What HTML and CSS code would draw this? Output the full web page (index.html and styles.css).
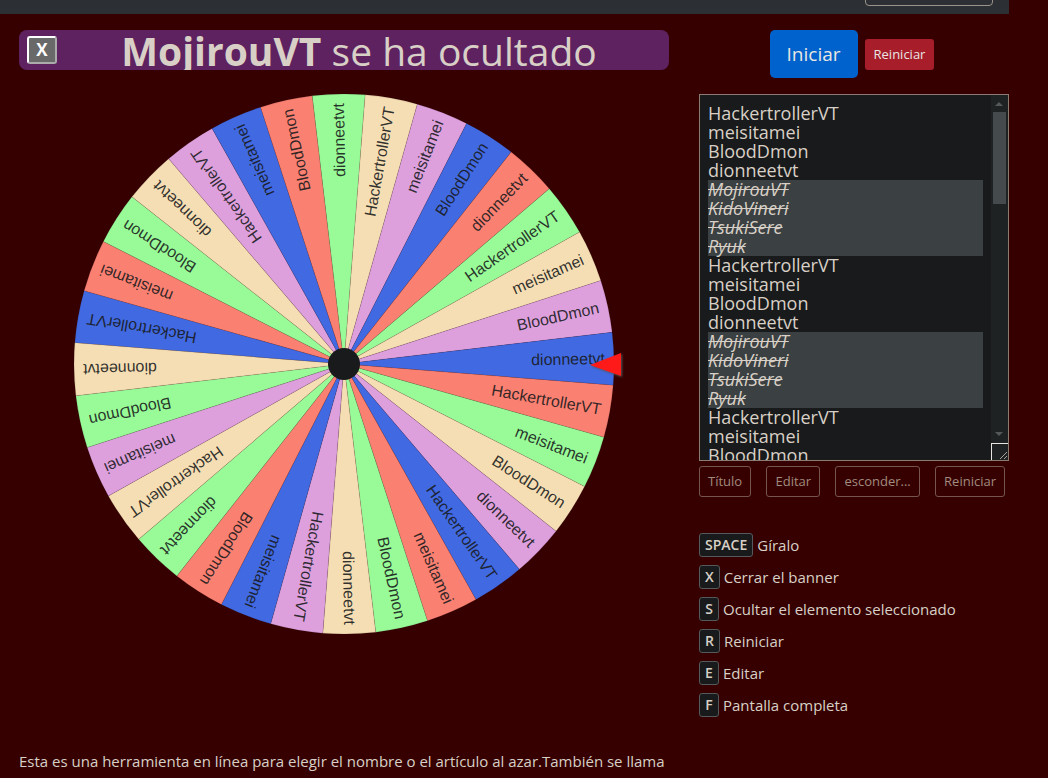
FILE: index.html
```
<!DOCTYPE html>
<html lang="es">
<head>
	<meta charset="UTF-8">
	<title>Ruleta</title>
	<link rel="stylesheet" href="styles.css">
</head>
<body>
	<header class="navbar">
		<input type="text" class="nav-input" aria-label="Buscar">
	</header>
	<main class="page">
		<section class="wheel-column">
			<div class="banner">
				<button class="banner-close">X</button>
				<p class="banner-text"><strong>MojirouVT</strong> se ha ocultado</p>
			</div>
			<svg id="wheel" class="wheel" viewBox="-280 -270 560 540"></svg>
		</section>
		<section class="side">
			<div class="main-buttons">
				<button class="btn btn-start">Iniciar</button>
				<button class="btn btn-reset">Reiniciar</button>
			</div>
			<div class="list-box">
				<div class="list" contenteditable="true" spellcheck="false" role="textbox" aria-multiline="true" aria-label="Elementos">
					<div>HackertrollerVT</div>
					<div>meisitamei</div>
					<div>BloodDmon</div>
					<div>dionneetvt</div>
					<div class="hidden-item">MojirouVT</div>
					<div class="hidden-item">KidoVineri</div>
					<div class="hidden-item">TsukiSere</div>
					<div class="hidden-item">Ryuk</div>
					<div>HackertrollerVT</div>
					<div>meisitamei</div>
					<div>BloodDmon</div>
					<div>dionneetvt</div>
					<div class="hidden-item">MojirouVT</div>
					<div class="hidden-item">KidoVineri</div>
					<div class="hidden-item">TsukiSere</div>
					<div class="hidden-item">Ryuk</div>
					<div>HackertrollerVT</div>
					<div>meisitamei</div>
					<div>BloodDmon</div>
				</div>
				<div class="scrollbar">
					<svg class="arrow" viewBox="0 0 17 17"><path d="M4 11h8L8 7z"/></svg>
					<div class="track"><div class="thumb"></div></div>
					<svg class="arrow" viewBox="0 0 17 17"><path d="M4 6h8l-4 4z"/></svg>
					<svg class="grip" viewBox="0 0 16 16"><path d="M8 15l7-7M12 15l3-3"/></svg>
				</div>
			</div>
			<div class="tools">
				<button class="btn btn-tool">Título</button>
				<button class="btn btn-tool">Editar</button>
				<button class="btn btn-tool">esconder...</button>
				<button class="btn btn-tool">Reiniciar</button>
			</div>
			<ul class="keys">
				<li><kbd>SPACE</kbd> Gíralo</li>
				<li><kbd>X</kbd> Cerrar el banner</li>
				<li><kbd>S</kbd> Ocultar el elemento seleccionado</li>
				<li><kbd>R</kbd> Reiniciar</li>
				<li><kbd>E</kbd> Editar</li>
				<li><kbd>F</kbd> Pantalla completa</li>
			</ul>
		</section>
	</main>
	<p class="about">Esta es una herramienta en línea para elegir el nombre o el artículo al azar.También se llama</p>
	<script src="wheel.js"></script>
</body>
</html>
```
FILE: styles.css
```
* {
	box-sizing: border-box;
}
body {
	margin: 0;
	background-color: #360000;
	color: #d8d0c6;
	font-family: "Open Sans", "Noto Sans", sans-serif;
	font-size: 15px;
	overflow: hidden;
}
button {
	font-family: inherit;
	cursor: pointer;
}
.navbar {
	display: flex;
	justify-content: flex-end;
	align-items: flex-end;
	height: 14px;
	margin-right: 39px;
	padding: 0 16px 8px;
	background-color: #2c2f33;
	overflow: hidden;
}
.nav-input {
	flex: none;
	width: 128px;
	height: 38px;
	border: 1px solid #999389;
	border-radius: 4px;
	background: transparent;
	color: inherit;
}
.page {
	display: grid;
	grid-template-columns: 1fr 310px;
	gap: 30px;
	padding: 16px 39px 0 19px;
}
.banner {
	display: flex;
	align-items: center;
	height: 40px;
	margin-bottom: 24px;
	padding: 0 8px;
	border-radius: 8px;
	background-color: #5f2260;
	overflow: hidden;
}
.banner-close {
	width: 30px;
	height: 28px;
	padding: 0;
	border: 2px outset #fff;
	border-radius: 3px;
	background-color: #696969;
	color: #fff;
	font-size: 17px;
	font-weight: bold;
	line-height: 20px;
}
.banner-text {
	flex: 1;
	margin: 0;
	padding-top: 2px;
	font-size: 39px;
	line-height: 48px;
	text-align: center;
	white-space: nowrap;
}
.wheel {
	display: block;
	width: 100%;
	max-width: 560px;
	margin: 0 auto;
}
.wheel text {
	fill: #181a1b;
	fill-opacity: 0.9;
	font-family: "Liberation Sans", Arial, sans-serif;
	font-size: 16px;
	text-anchor: end;
}
.hub {
	fill: #181a1b;
}
.pointer {
	fill: #ff1a1a;
	filter: drop-shadow(1px 1px 1px #555);
}
.main-buttons {
	display: flex;
	justify-content: center;
	align-items: center;
	gap: 7px;
	margin-bottom: 16px;
	padding-right: 4px;
}
.btn {
	border: 1px solid transparent;
	border-radius: 3px;
	padding: 0 8px;
	font-size: 13px;
	line-height: 29px;
}
.btn-start {
	padding: 0 16px;
	border-radius: 5px;
	background-color: #0062cc;
	color: #e8e6e3;
	font-size: 19px;
	line-height: 46px;
}
.btn-reset {
	background-color: #a71d2a;
	color: #e8e6e3;
}
.list-box {
	display: flex;
	height: 367px;
	border: 1px solid #8c7b70;
	background-color: #181a1b;
}
.list {
	flex: 1;
	padding: 9px 8px 0;
	font-size: 18px;
	line-height: 19px;
	overflow: hidden;
	outline: none;
}
.hidden-item {
	background-color: #3b4042;
	font-style: italic;
	text-decoration: line-through;
}
.scrollbar {
	display: flex;
	flex-direction: column;
	width: 17px;
	background-color: #1f2223;
}
.arrow {
	width: 17px;
	height: 17px;
	fill: #55595b;
}
.track {
	flex: 1;
	padding: 0 2px;
}
.thumb {
	height: 92px;
	background-color: #454a4d;
}
.grip {
	width: 17px;
	height: 17px;
	border-top: 1px solid #e8e6e3;
	border-left: 1px solid #e8e6e3;
	fill: none;
	stroke: #a8a29a;
}
.tools {
	display: flex;
	justify-content: space-between;
	margin: 5px 4px 36px 0;
}
.btn-tool {
	border-color: #75554d;
	background: transparent;
	color: #a18b7e;
}
.keys {
	margin: 0;
	padding: 0;
	list-style: none;
}
.keys li {
	display: flex;
	align-items: center;
	gap: 4px;
	height: 24px;
	margin-bottom: 8px;
}
kbd {
	min-width: 20px;
	padding: 0 5px;
	border: 1px solid #55595b;
	border-radius: 3px;
	background-color: #181a1b;
	font-family: inherit;
	font-size: 14px;
	font-weight: 600;
	line-height: 22px;
	text-align: center;
}
.about {
	margin: 24px 39px 0 19px;
	line-height: 24px;
}
```
FILE: wheel.js
```
const svgNs = 'http://www.w3.org/2000/svg';
const wheel = document.getElementById('wheel');
const names = ['HackertrollerVT', 'meisitamei', 'BloodDmon', 'dionneetvt'];
const palette = ['royalblue', 'salmon', 'palegreen', 'wheat', 'plum'];
const count = 32;
const radius = 270;
const step = 360 / count;
const startAngle = 184.5; // ángulo donde empieza el primer elemento

function add(tag, attrs, text) {
	const el = document.createElementNS(svgNs, tag);
	for (const key in attrs) {
		el.setAttribute(key, attrs[key]);
	}
	if (text) {
		el.textContent = text;
	}
	wheel.appendChild(el);
}
function point(angle) {
	const rad = angle * Math.PI / 180;
	return `${radius * Math.cos(rad)} ${radius * Math.sin(rad)}`;
}
function colorOf(i) {
	// los dos últimos no repiten el color del primero
	if (i >= count - 2) {
		return palette[i - count + 4];
	}
	return palette[i % palette.length];
}
for (let i = 0; i < count; i++) {
	const a = startAngle + i * step;
	add('path', {
		d: `M0 0L${point(a)}A${radius} ${radius} 0 0 1 ${point(a + step)}Z`,
		fill: colorOf(i),
		stroke: '#181a1b',
		'stroke-width': 0.1
	});
}
for (let i = 0; i < count; i++) {
	const a = startAngle + (i + 0.5) * step;
	add('text', { x: 261, y: 5, transform: `rotate(${a})` }, names[i % names.length]);
}
add('circle', { class: 'hub', r: 16 });
add('path', { class: 'pointer', d: 'M246 1L277 -11V12Z' });
```
